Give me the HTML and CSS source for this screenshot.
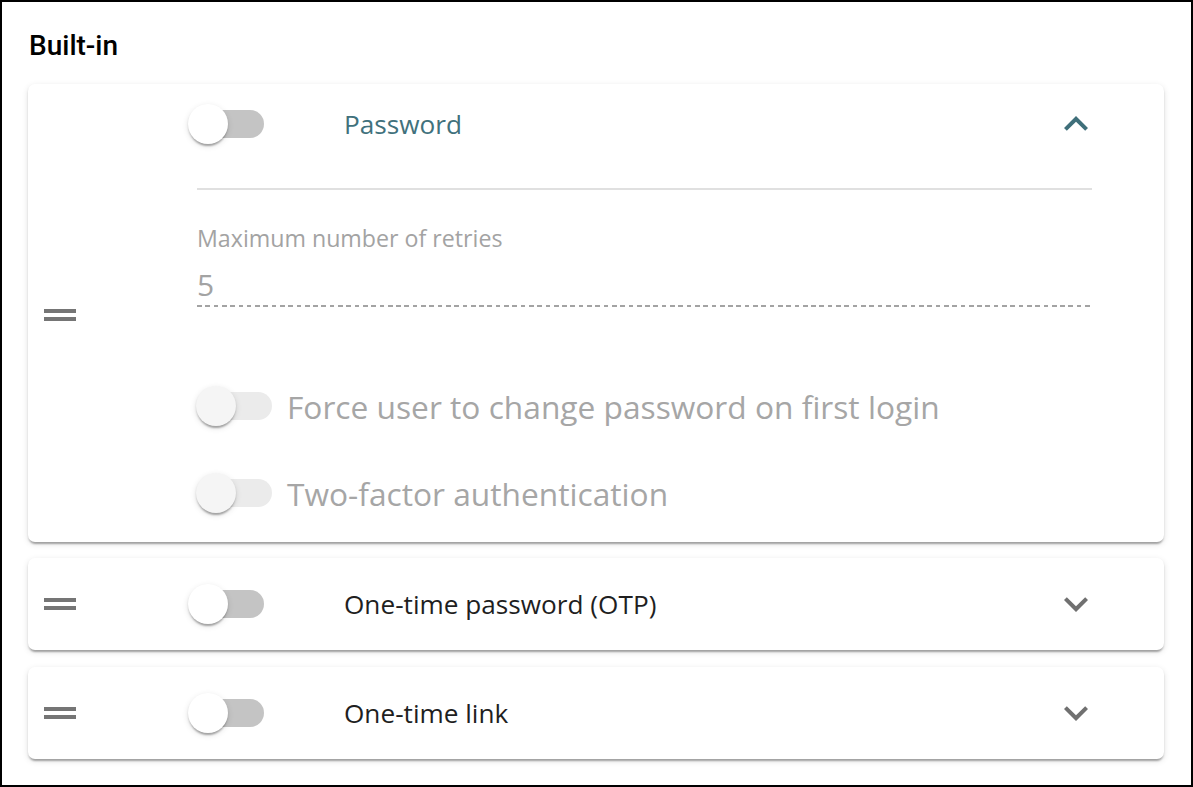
FILE: index.html
```html
<!DOCTYPE html>
<html lang="en">
<head>
<meta charset="utf-8">
<title>Built-in</title>
<link rel="stylesheet" href="styles.css">
</head>
<body>
<div class="frame">
  <h2 class="section-title">Built-in</h2>
  <div class="list">
    <div class="card expanded">
      <div class="handle"><svg viewBox="0 0 24 24"><path d="M20 9H4v2h16V9zM4 15h16v-2H4v2z"/></svg></div>
      <div class="main">
        <div class="header">
          <span class="switch"><span class="track"></span><span class="thumb"></span></span>
          <span class="title active">Password</span>
          <svg class="chevron active" viewBox="0 0 24 24"><path d="M12 8l-6 6 1.41 1.41L12 10.83l4.59 4.58L18 14z"/></svg>
        </div>
        <div class="details">
          <div class="divider"></div>
          <div class="field-label">Maximum number of retries</div>
          <div class="field-value">5</div>
          <div class="field-underline"></div>
          <div class="option first">
            <span class="switch disabled"><span class="track"></span><span class="thumb"></span></span>
            <span class="option-label">Force user to change password on first login</span>
          </div>
          <div class="option">
            <span class="switch disabled"><span class="track"></span><span class="thumb"></span></span>
            <span class="option-label">Two-factor authentication</span>
          </div>
        </div>
      </div>
    </div>
    <div class="card">
      <div class="handle"><svg viewBox="0 0 24 24"><path d="M20 9H4v2h16V9zM4 15h16v-2H4v2z"/></svg></div>
      <div class="main">
        <div class="header">
          <span class="switch"><span class="track"></span><span class="thumb"></span></span>
          <span class="title">One-time password (OTP)</span>
          <svg class="chevron" viewBox="0 0 24 24"><path d="M16.59 8.59L12 13.17 7.41 8.59 6 10l6 6 6-6z"/></svg>
        </div>
      </div>
    </div>
    <div class="card last">
      <div class="handle"><svg viewBox="0 0 24 24"><path d="M20 9H4v2h16V9zM4 15h16v-2H4v2z"/></svg></div>
      <div class="main">
        <div class="header">
          <span class="switch"><span class="track"></span><span class="thumb"></span></span>
          <span class="title">One-time link</span>
          <svg class="chevron" viewBox="0 0 24 24"><path d="M16.59 8.59L12 13.17 7.41 8.59 6 10l6 6 6-6z"/></svg>
        </div>
      </div>
    </div>
  </div>
</div>
</body>
</html>
```

FILE: styles.css
```css
html, body {
  margin: 0;
  padding: 0;
  background: #fff;
}

body {
  font-family: "Open Sans", "Noto Sans", sans-serif;
}

.frame {
  box-sizing: border-box;
  width: 1193px;
  height: 787px;
  border: 2px solid #000;
  padding: 28px 27px 0 26px;
  background: #fff;
  overflow: hidden;
}

.section-title {
  margin: 0 0 22px 1px;
  font-family: Roboto, "Liberation Sans", sans-serif;
  font-weight: 500;
  font-size: 28px;
  line-height: 32px;
  color: #000;
}

.list {
  display: flex;
  flex-direction: column;
  gap: 16px;
}

.card {
  display: flex;
  align-items: center;
  background: #fff;
  border-radius: 7px;
  box-shadow: 0 4px 2px -2px rgba(0, 0, 0, 0.2), 0 2px 2px 0 rgba(0, 0, 0, 0.14), 0 2px 6px 0 rgba(0, 0, 0, 0.12);
}

.card.last {
  margin-top: 1px;
}

.handle {
  flex: none;
  width: 48px;
  height: 48px;
  margin-left: 8px;
}

.card.expanded .handle {
  margin-top: 3px;
}

.handle svg {
  display: block;
  width: 48px;
  height: 48px;
  fill: #757575;
}

.main {
  flex: 1;
  min-width: 0;
  margin-left: 104px;
  padding-right: 64px;
}

.header {
  display: flex;
  align-items: center;
  height: 92px;
}

.card.expanded .header {
  height: 80px;
}

.title {
  flex: 1;
  margin-left: 80px;
  font-size: 26.2px;
  color: #1f1f1f;
}

.title.active {
  color: #41717c;
}

.chevron {
  flex: none;
  display: block;
  width: 48px;
  height: 48px;
  fill: #707070;
}

.chevron.active {
  fill: #3f6f7a;
}

/* switch */
.switch {
  position: relative;
  flex: none;
  display: inline-block;
  width: 76px;
  height: 40px;
}

.switch .track {
  position: absolute;
  left: 8px;
  top: 6px;
  width: 68px;
  height: 28px;
  border-radius: 14px;
  background: #c4c4c4;
}

.switch .thumb {
  position: absolute;
  left: 0;
  top: 0;
  width: 40px;
  height: 40px;
  border-radius: 50%;
  background: #fff;
  box-shadow: 0 4px 2px -2px rgba(0, 0, 0, 0.2), 0 2px 2px 0 rgba(0, 0, 0, 0.14), 0 2px 6px 0 rgba(0, 0, 0, 0.12);
}

.switch.disabled .track {
  background: #ebebeb;
}

.switch.disabled .thumb {
  background: #f5f5f5;
}

/* details */
.details {
  margin: 0 8px 0 9px;
  padding-bottom: 25px;
}

.divider {
  margin-top: 24px;
  height: 2px;
  background: #e0e0e0;
}

.field-label {
  margin-top: 35px;
  font-size: 23.2px;
  line-height: 26px;
  color: #a3a3a3;
}

.field-value {
  margin-top: 16px;
  padding-bottom: 2px;
  font-size: 30px;
  line-height: 36px;
  color: #a3a3a3;
}

.field-underline {
  height: 2px;
  background: repeating-linear-gradient(to right, #a3a3a3 0, #a3a3a3 4.6px, transparent 4.6px, transparent 8.3px);
}

.option {
  display: flex;
  align-items: center;
  height: 48px;
  margin-top: 39px;
}

.option.first {
  margin-top: 75px;
}

.option .switch {
  margin-left: -1px;
}

.option-label {
  margin-left: 15px;
  font-size: 31.7px;
  color: #a6a6a6;
  white-space: nowrap;
}
```
